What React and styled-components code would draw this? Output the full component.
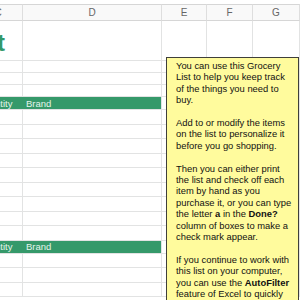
import React from "react";
import styled, { createGlobalStyle } from "styled-components";

const GlobalStyle = createGlobalStyle`
  html, body {
    margin: 0;
    padding: 0;
    background: #ffffff;
  }
  body {
    font-family: "Liberation Sans", Arial, sans-serif;
  }
`;

const columns = [
  { id: "C", width: 49 },
  { id: "D", width: 139 },
  { id: "E", width: 45 },
  { id: "F", width: 46 },
  { id: "G", width: 47 },
];

const template = columns.map((c) => `${c.width}px`).join(" ");

const noteLines = [
  ["You can use this Grocery"],
  ["List to help you keep track"],
  ["of the things you need to"],
  ["buy."],
  [],
  ["Add to or modify the items"],
  ["on the list to personalize it"],
  ["before you go shopping."],
  [],
  ["Then you can either print"],
  ["the list and check off each"],
  ["item by hand as you"],
  ["purchase it, or you can type"],
  ["the letter ", { b: "a" }, " in the ", { b: "Done?" }],
  ["column of boxes to make a"],
  ["check mark appear."],
  [],
  ["If you continue to work with"],
  ["this list on your computer,"],
  ["you can use the ", { b: "AutoFilter" }],
  ["feature of Excel to quickly"],
  ["find items in the list."],
];

// row heights below the title, top to bottom
const bodyRows = [
  { h: 12 },
  { h: 12 },
  { h: 12 },
  { h: 13, band: true },
  { h: 14.5 },
  { h: 14.5 },
  { h: 14.5 },
  { h: 14.5 },
  { h: 14.5 },
  { h: 14.5 },
  { h: 14.5 },
  { h: 14.5 },
  { h: 14.5 },
  { h: 13, band: true },
  { h: 14.5 },
  { h: 14.5 },
  { h: 14.5 },
];

export default function App() {
  return (
    <>
      <GlobalStyle />
      <Viewport>
        <TopStrip />
        <Sheet>
          <Row $h={17}>
            {columns.map((c) => (
              <HeadCell key={c.id}>{c.id}</HeadCell>
            ))}
          </Row>
          <Row $h={40}>
            <Cell $overflow>
              <Title>Grocery List</Title>
            </Cell>
            <Cell />
            <Cell />
            <Cell />
            <Cell />
          </Row>
          {bodyRows.map((r, i) => (
            <Row key={i} $h={r.h}>
              {r.band ? (
                <>
                  <BandCell $first>Quantity</BandCell>
                  <BandCell>Brand</BandCell>
                </>
              ) : (
                <>
                  <Cell />
                  <Cell />
                </>
              )}
              <Cell />
              <Cell />
              <Cell />
            </Row>
          ))}
        </Sheet>
        <Note>
          {noteLines.map((line, i) => (
            <NoteLine key={i}>
              {line.length === 0
                ? "\u00a0"
                : line.map((part, j) =>
                    typeof part === "string" ? (
                      <React.Fragment key={j}>{part}</React.Fragment>
                    ) : (
                      <b key={j}>{part.b}</b>
                    )
                  )}
            </NoteLine>
          ))}
        </Note>
      </Viewport>
    </>
  );
}

const Viewport = styled.div`
  position: relative;
  width: 300px;
  height: 300px;
  overflow: hidden;
  background: #ffffff;
`;

const TopStrip = styled.div`
  height: 4px;
  background: #ffffff;
`;

const Sheet = styled.div`
  display: flex;
  flex-direction: column;
  margin-left: -26px;
  width: ${columns.reduce((s, c) => s + c.width, 0)}px;
`;

const Row = styled.div`
  display: grid;
  grid-template-columns: ${template};
  height: ${(p) => p.$h}px;
`;

const Cell = styled.div`
  box-sizing: border-box;
  border-right: 1px solid #e2e3e3;
  border-bottom: 1px solid #e2e3e3;
  position: relative;
  overflow: ${(p) => (p.$overflow ? "visible" : "hidden")};
  display: flex;
  align-items: flex-end;
  justify-content: flex-end;
`;

const HeadCell = styled.div`
  box-sizing: border-box;
  border-top: 1px solid #d6d6d6;
  border-right: 1px solid #dedede;
  border-bottom: 1px solid #d6d6d6;
  background: #f9f9f9;
  color: #666666;
  font-size: 10px;
  display: flex;
  align-items: center;
  justify-content: center;
`;

const Title = styled.span`
  font-family: "Liberation Sans", Arial, sans-serif;
  font-weight: bold;
  font-size: 24px;
  line-height: 24px;
  color: #33996a;
  white-space: nowrap;
  padding-right: 17px;
  padding-bottom: 5px;
`;

const BandCell = styled.div`
  box-sizing: border-box;
  background: #35996a;
  border-bottom: 1px solid #e2e3e3;
  border-right: ${(p) => (p.$first ? "none" : "1px solid #e2e3e3")};
  color: #e4f4ea;
  font-size: 9.5px;
  padding-left: 3px;
  display: flex;
  align-items: center;
  white-space: nowrap;
  overflow: hidden;
`;

const Note = styled.div`
  position: absolute;
  left: 166px;
  top: 57px;
  width: 133px;
  height: 270px;
  box-sizing: border-box;
  background: #fffb9d;
  border: 1px solid #3f3f3a;
  padding: 2px 4px 0 9px;
  color: #111111;
  font-size: 9.4px;
  line-height: 11.4px;
`;

const NoteLine = styled.div`
  white-space: nowrap;
  b {
    font-weight: bold;
  }
`;
